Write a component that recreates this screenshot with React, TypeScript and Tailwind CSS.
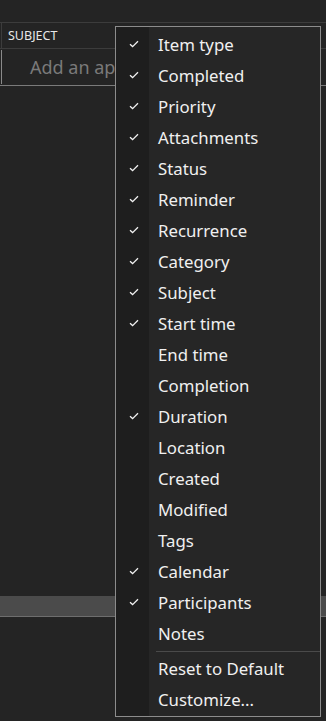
import React from "react";

const items: { label: string; checked: boolean }[] = [
  { label: "Item type", checked: true },
  { label: "Completed", checked: true },
  { label: "Priority", checked: true },
  { label: "Attachments", checked: true },
  { label: "Status", checked: true },
  { label: "Reminder", checked: true },
  { label: "Recurrence", checked: true },
  { label: "Category", checked: true },
  { label: "Subject", checked: true },
  { label: "Start time", checked: true },
  { label: "End time", checked: false },
  { label: "Completion", checked: false },
  { label: "Duration", checked: true },
  { label: "Location", checked: false },
  { label: "Created", checked: false },
  { label: "Modified", checked: false },
  { label: "Tags", checked: false },
  { label: "Calendar", checked: true },
  { label: "Participants", checked: true },
  { label: "Notes", checked: false },
];

function Check() {
  return (
    <svg width="10" height="8" viewBox="0 0 10 8" fill="none">
      <path d="M1 4.2 L3.6 6.6 L9 1.2" stroke="#f2f2f2" strokeWidth="1.3" />
    </svg>
  );
}

function Row({ label, checked }: { label: string; checked?: boolean }) {
  return (
    <div className="flex h-[31px] items-center">
      <div className="flex w-[33px] shrink-0 items-center justify-center pb-[2px] pl-[2px]">
        {checked ? <Check /> : null}
      </div>
      <div className="pl-[9px] pt-[2px] text-[16.8px] leading-none text-[#f0f0f0]">{label}</div>
    </div>
  );
}

export default function App() {
  return (
    <div
      className="relative flex h-[721px] w-[326px] flex-col overflow-hidden bg-[#242424]"
      style={{ fontFamily: '"Noto Sans", "Open Sans", sans-serif' }}
    >
      <div className="h-[22px] shrink-0" />
      <div className="h-px shrink-0 bg-[#3c3c3c]" />
      <div className="flex h-[25px] shrink-0 items-center">
        <div className="ml-px h-full w-px bg-[#3c3c3c]" />
        <div className="pl-[6px] pt-[2px] text-[12.5px] text-[#e8e8e8]">SUBJECT</div>
      </div>
      <div className="h-px shrink-0 bg-[#3c3c3c]" />
      <div className="flex h-[36px] shrink-0 items-center">
        <div className="ml-px h-[34px] w-px bg-[#8a8a8a]" />
        <div className="w-[113px] overflow-hidden whitespace-nowrap pl-[28px] text-[18px] text-[#7a7a7a]">
          Add an appointment
        </div>
      </div>
      <div className="h-px shrink-0 bg-[#7a7a7a]" />
      <div className="flex-1" />
      <div className="h-[20px] shrink-0 bg-[#4b4b4b]" />
      <div className="h-px shrink-0 bg-[#6e6e6e]" />
      <div className="h-[104px] shrink-0" />

      <div className="absolute left-[115px] top-[26px] w-[206px] border border-[#8c8c8c] bg-[#262626]">
        <div className="relative pb-px pt-[2px]">
          <div className="absolute bottom-0 left-0 top-0 w-[33px] bg-[#1e1e1e]" />
          <div className="relative">
            {items.map((it) => (
              <Row key={it.label} label={it.label} checked={it.checked} />
            ))}
            <div className="mb-px ml-[40px] mt-[2px] h-px bg-[#4a4a4a]" />
            <Row label="Reset to Default" />
            <Row label="Customize..." />
          </div>
        </div>
      </div>
    </div>
  );
}
